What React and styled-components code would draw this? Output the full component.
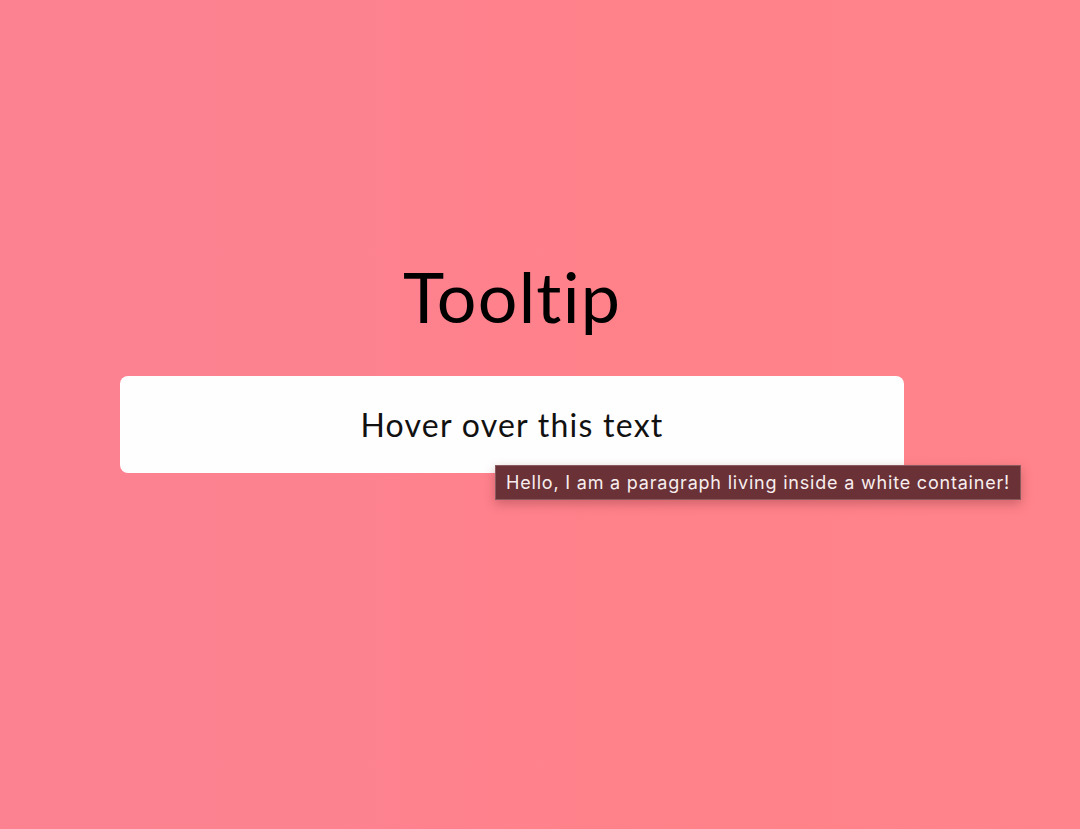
import React from "react";
import styled, { createGlobalStyle } from "styled-components";

const Global = createGlobalStyle`
  html, body { margin: 0; padding: 0; }
  body {
    background: linear-gradient(90deg, #fc8291 0%, #fd8290 30%, #ff8189 60%, #ff848b 100%);
    min-height: 829px;
    font-family: "Lato", "Noto Sans", sans-serif;
  }
`;

const Page = styled.main`
  width: 1080px;
  height: 829px;
  overflow: hidden;
  display: flex;
  flex-direction: column;
  align-items: flex-start;
  padding-top: 254px;
  box-sizing: border-box;
`;

const Column = styled.section`
  width: 784px;
  margin-left: 120px;
  display: flex;
  flex-direction: column;
  align-items: center;
`;

const Title = styled.h1`
  margin: 0;
  font-family: "Lato", "Noto Sans", sans-serif;
  font-weight: 400;
  font-size: 70px;
  line-height: 84px;
  color: #000;
  letter-spacing: 1.2px;
`;

const Card = styled.div`
  position: relative;
  margin-top: 38px;
  width: 100%;
  height: 97px;
  background: #fffefe;
  border-radius: 8px;
  display: flex;
  align-items: center;
  justify-content: center;
`;

const CardText = styled.p`
  margin: 0;
  font-family: "Lato", "Noto Sans", sans-serif;
  font-size: 32px;
  color: #111;
  letter-spacing: 1.25px;
`;

const Tooltip = styled.div`
  position: absolute;
  left: 375px;
  top: 89px;
  height: 35px;
  box-sizing: border-box;
  padding: 0 10px;
  display: flex;
  align-items: center;
  white-space: nowrap;
  background: #6a3137;
  border: 1px solid #8b5a5f;
  box-shadow: 0 4px 10px rgba(120, 40, 50, 0.35);
  color: #f8eeee;
  font-family: "Inter", "Liberation Sans", sans-serif;
  font-size: 18px;
  letter-spacing: 0.8px;
`;

export default function App() {
  return (
    <>
      <Global />
      <Page>
        <Column>
          <Title>Tooltip</Title>
          <Card>
            <CardText>Hover over this text</CardText>
            <Tooltip>Hello, I am a paragraph living inside a white container!</Tooltip>
          </Card>
        </Column>
      </Page>
    </>
  );
}
